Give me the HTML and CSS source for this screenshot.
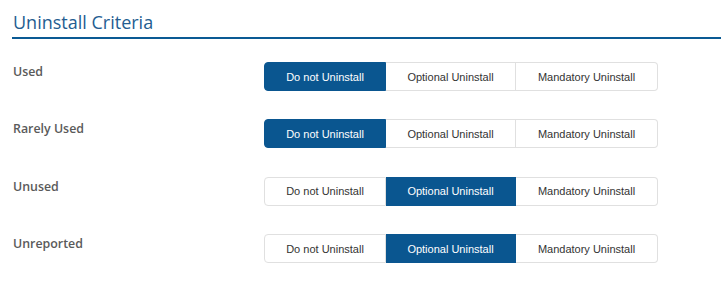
FILE: index.html
```html
<!DOCTYPE html>
<html lang="en">

<head>
    <meta charset="UTF-8">
    <meta name="viewport" content="width=device-width, initial-scale=1.0">
    <title>Uninstall Criteria</title>
    <link rel="stylesheet" href="styles.css">
</head>

<body>
    <div class="section">
        <h2 class="section-title">Uninstall Criteria</h2>

        <div class="criteria-list">
            <div class="criteria-row">
                <div class="criteria-label">Used</div>
                <div class="btn-group">
                    <button class="btn btn-keep active">Do not Uninstall</button>
                    <button class="btn btn-optional">Optional Uninstall</button>
                    <button class="btn btn-mandatory">Mandatory Uninstall</button>
                </div>
            </div>

            <div class="criteria-row">
                <div class="criteria-label">Rarely Used</div>
                <div class="btn-group">
                    <button class="btn btn-keep active">Do not Uninstall</button>
                    <button class="btn btn-optional">Optional Uninstall</button>
                    <button class="btn btn-mandatory">Mandatory Uninstall</button>
                </div>
            </div>

            <div class="criteria-row">
                <div class="criteria-label">Unused</div>
                <div class="btn-group">
                    <button class="btn btn-keep">Do not Uninstall</button>
                    <button class="btn btn-optional active">Optional Uninstall</button>
                    <button class="btn btn-mandatory">Mandatory Uninstall</button>
                </div>
            </div>

            <div class="criteria-row">
                <div class="criteria-label">Unreported</div>
                <div class="btn-group">
                    <button class="btn btn-keep">Do not Uninstall</button>
                    <button class="btn btn-optional active">Optional Uninstall</button>
                    <button class="btn btn-mandatory">Mandatory Uninstall</button>
                </div>
            </div>
        </div>
    </div>
</body>

</html>
```

FILE: styles.css
```css
body {
    margin: 0;
    background-color: #ffffff;
    font-family: "Open Sans", Arial, sans-serif;
}

.section {
    padding-left: 12px;
}

.section-title {
    margin: 0;
    padding: 10px 0 3px 1px;
    font-size: 18px;
    font-weight: 400;
    line-height: 24px;
    color: #245d91;
    border-bottom: 2px solid #0a5a94;
}

.criteria-list {
    display: flex;
    flex-direction: column;
    gap: 28.4px;
    margin-top: 23px;
}

.criteria-row {
    display: flex;
    align-items: flex-start;
    height: 29px;
}

.criteria-label {
    width: 251px;
    padding-left: 1px;
    padding-top: 1px;
    font-size: 12.4px;
    font-weight: 600;
    line-height: 18px;
    color: #5a5a5a;
}

.btn-group {
    display: flex;
}

.btn {
    height: 29px;
    padding: 0;
    margin: 0;
    font-family: "Liberation Sans", Arial, sans-serif;
    font-size: 11px;
    text-align: center;
    color: #333333;
    background-color: #ffffff;
    border: 1px solid #e0e0e0;
    border-left: none;
    cursor: pointer;
}

.btn-keep {
    width: 122px;
}

.btn-optional {
    width: 130px;
}

.btn-mandatory {
    width: 142px;
}

.btn:first-child {
    border-left: 1px solid #e0e0e0;
    border-radius: 4px 0 0 4px;
}

.btn:last-child {
    border-radius: 0 4px 4px 0;
}

.btn.active {
    background-color: #0a5690;
    border-color: #0a5690;
    color: #ffffff;
}
```
